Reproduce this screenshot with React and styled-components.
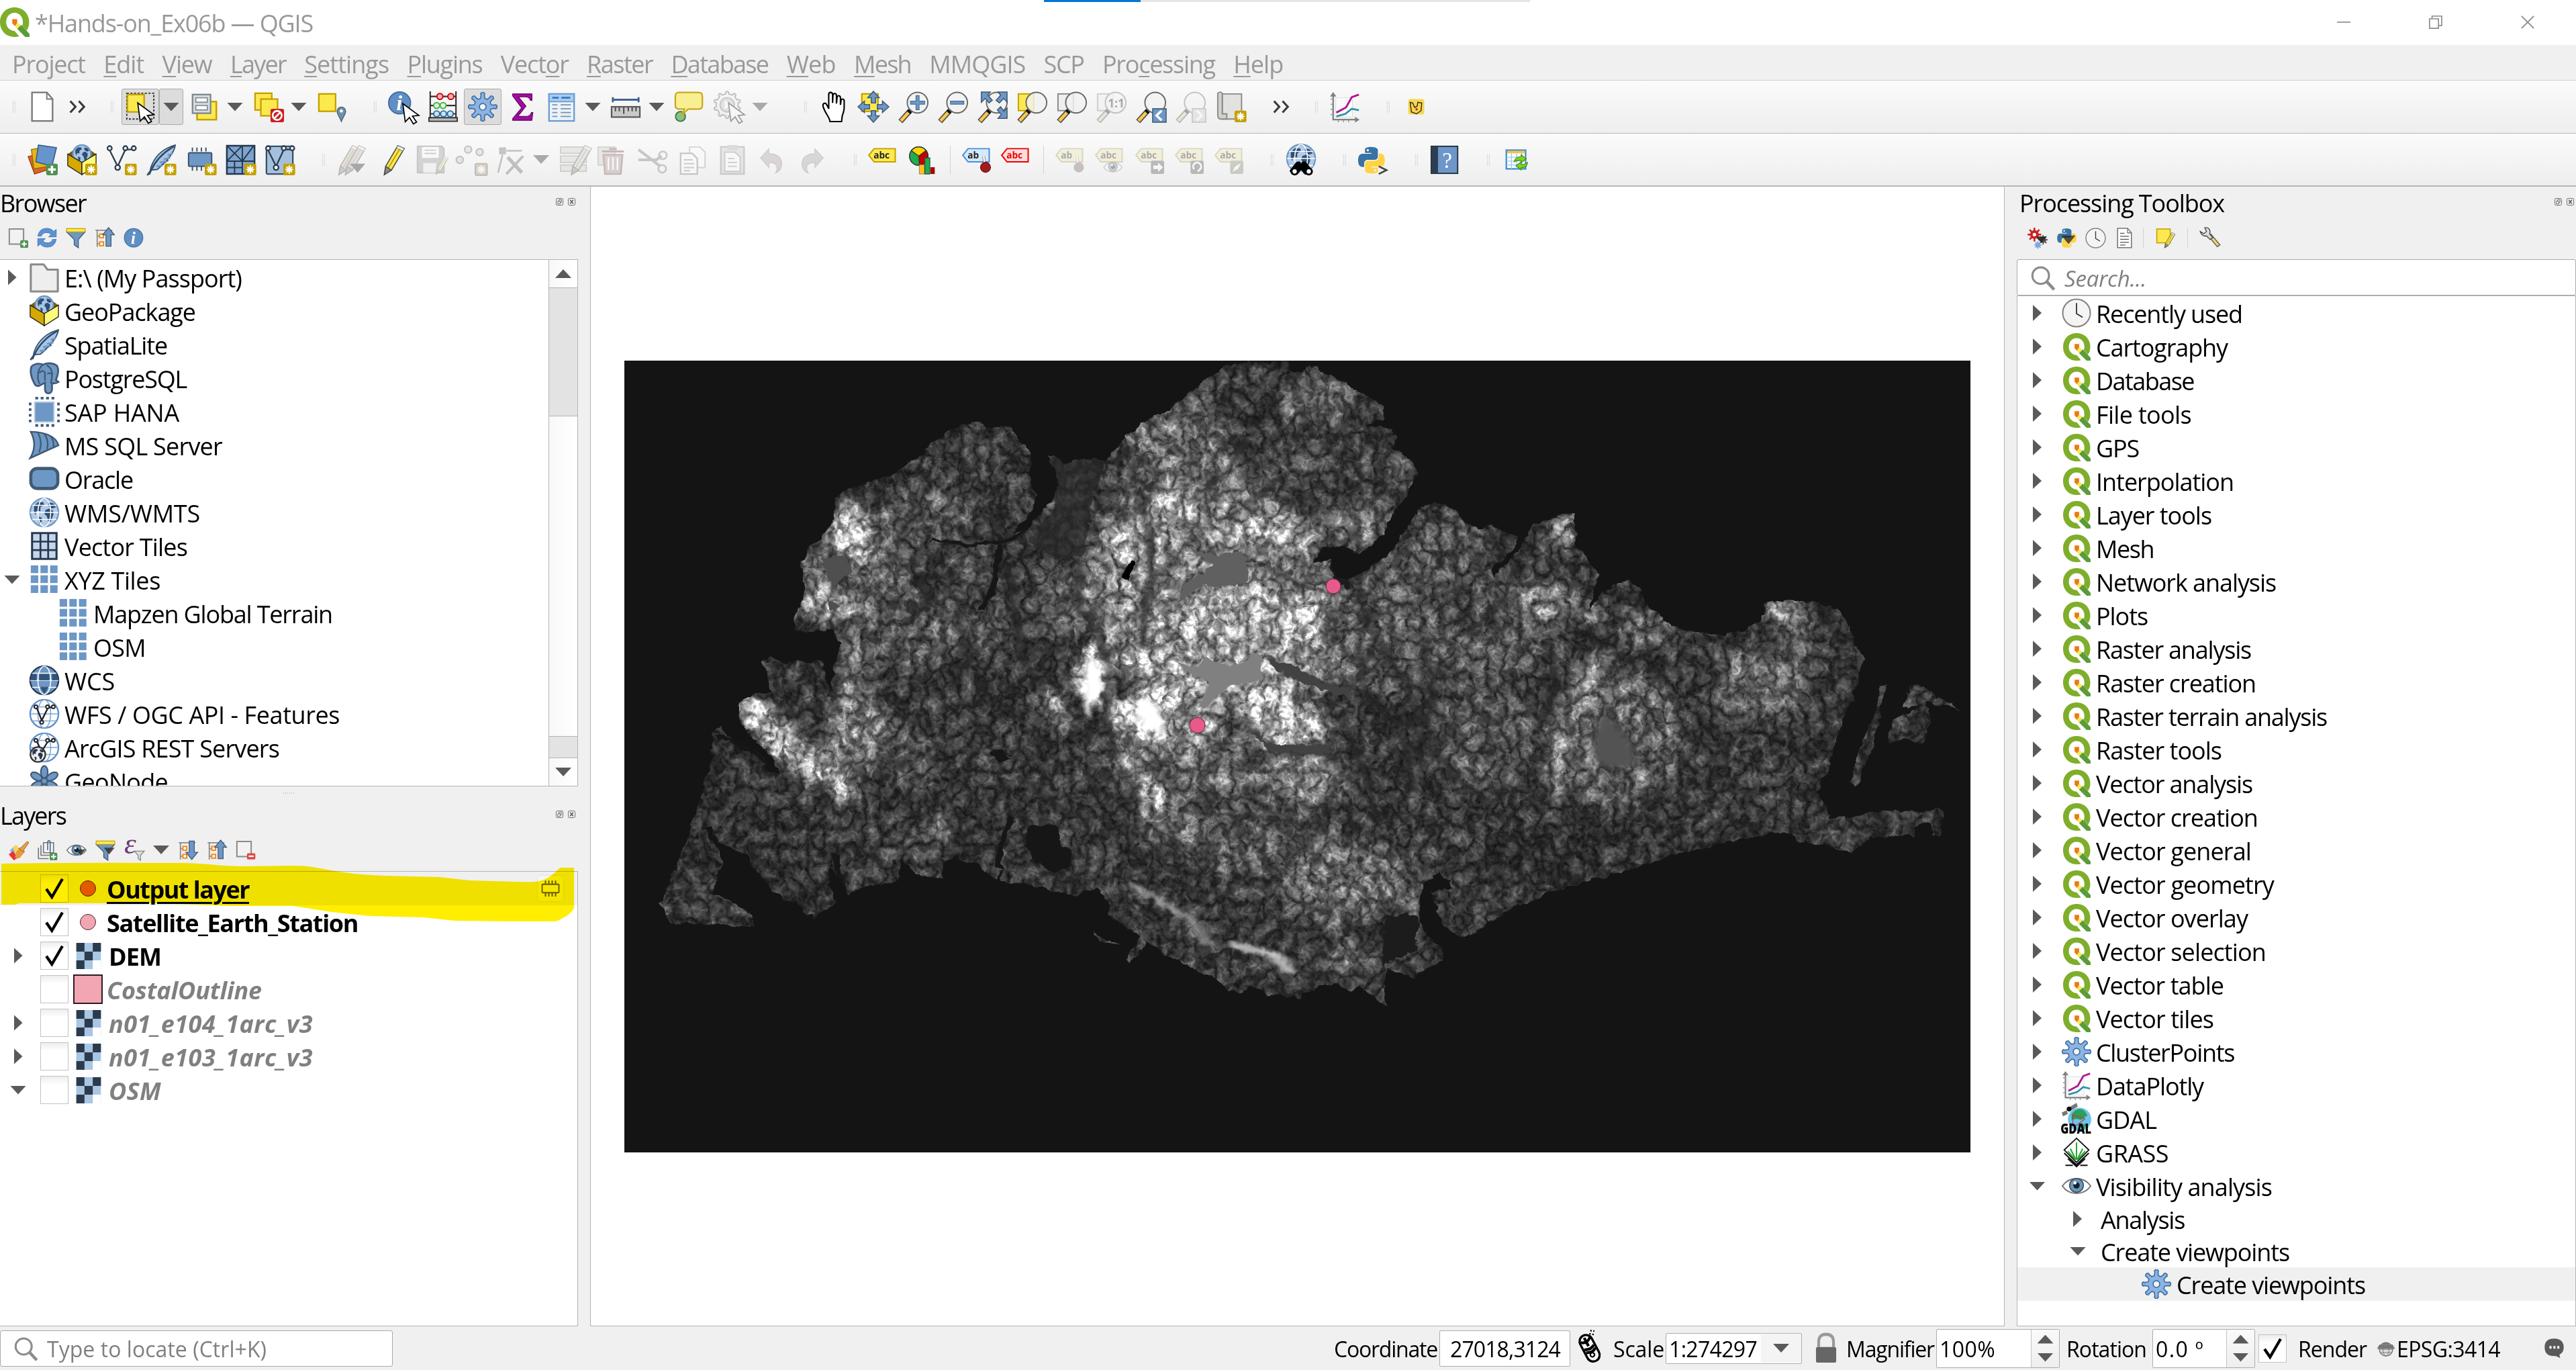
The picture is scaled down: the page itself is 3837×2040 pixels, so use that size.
import React, { useLayoutEffect, useRef, useState } from "react";
import styled, { createGlobalStyle, css } from "styled-components";

const Global = createGlobalStyle`
  html, body { margin: 0; padding: 0; background: #f0f0f0; }
  * { box-sizing: border-box; }
`;

const UI = `"Open Sans", "Noto Sans", sans-serif`;

/* ---------- text ---------- */

const TextSpan = styled.span`
  display: inline-block;
  flex: none;
  padding-top: 3px;
  white-space: pre;
  font-family: ${(p) => p.$family || UI};
  font-size: ${(p) => p.$size || 36}px;
  line-height: 1;
  color: ${(p) => p.$color || "#000"};
  font-weight: ${(p) => (p.$bold ? 700 : 400)};
  font-style: ${(p) => (p.$italic ? "italic" : "normal")};
  text-decoration: ${(p) => (p.$underline ? "underline" : "none")};
  text-decoration-thickness: 3px;
  text-underline-offset: 5px;
  u { text-decoration-thickness: 2px; text-underline-offset: 4px; }
`;

// Tracks the letters so that the label takes the given width.
function Label({ w, children, ...rest }) {
  const ref = useRef(null);
  const [track, setTrack] = useState(0);
  useLayoutEffect(() => {
    const el = ref.current;
    if (!w || !el) return;
    const n = el.textContent.length;
    setTrack((w - el.getBoundingClientRect().width) / n);
  }, [w]);
  return (
    <TextSpan ref={ref} style={{ letterSpacing: `${track}px` }} {...rest}>
      {children}
    </TextSpan>
  );
}

/* ---------- icons ---------- */

const Svg = styled.svg`
  display: block;
  flex: none;
  overflow: visible;
  width: ${(p) => p.$w}px;
  height: ${(p) => p.$h || p.$w}px;
  ${(p) => p.$off && css`opacity: 0.36; filter: grayscale(0.65);`}
`;

function gearPath(teeth, rOut, rIn, cx = 12, cy = 12) {
  let d = "";
  const step = (Math.PI * 2) / teeth;
  for (let i = 0; i < teeth; i++) {
    const a = i * step - Math.PI / 2;
    [[-0.3, rIn], [-0.17, rOut * 0.86], [-0.2, rOut * 0.93], [-0.08, rOut], [0.08, rOut], [0.2, rOut * 0.93], [0.17, rOut * 0.86], [0.3, rIn]].forEach(([k, r], j) => {
      d += `${i || j ? "L" : "M"}${(cx + Math.cos(a + k * step) * r).toFixed(2)} ${(cy + Math.sin(a + k * step) * r).toFixed(2)}`;
    });
  }
  return d + "Z";
}
const GEAR = gearPath(8, 11.6, 7);
const PY =
  "M14.25.18l.9.2.73.26.59.3.45.32.34.34.25.34.16.33.1.3.04.26.02.2-.01.13V8.5l-.05.63-.13.55-.21.46-.26.38-.3.31-.33.25-.35.19-.35.14-.33.1-.3.07-.26.04-.21.02H8.77l-.69.05-.59.14-.5.22-.41.27-.33.32-.27.35-.2.36-.15.37-.1.35-.07.32-.04.27-.02.21v3.06H3.17l-.21-.03-.28-.07-.32-.12-.35-.18-.36-.26-.36-.36-.35-.46-.32-.59-.28-.73-.21-.88-.14-1.05-.05-1.23.06-1.22.16-1.04.24-.87.32-.71.36-.57.4-.44.42-.33.42-.24.4-.16.36-.1.32-.05.24-.01h.16l.06.01h8.16v-.83H6.18l-.01-2.75-.02-.37.05-.34.11-.31.17-.28.25-.26.31-.23.38-.2.44-.18.51-.15.58-.12.64-.1.71-.06.77-.04.84-.02 1.27.05zm-6.3 1.98l-.23.33-.08.41.08.41.23.34.33.22.41.09.41-.09.33-.22.23-.34.08-.41-.08-.41-.23-.33-.33-.22-.41-.09-.41.09z";

const B = "#6d97c4";
const D = "#415a75";
const Y = "#fce94f";
const YB = "#c4a000";

const Star = () => (
  <g>
    <rect x="14.6" y="15" width="9.2" height="9" rx="1.2" fill={YB} />
    <path d="M19.2 16.3v6.4M16.2 19.5h6M17 17.3l4.4 4.4M21.4 17.3L17 21.7" stroke="#fff" strokeWidth="1.1" />
  </g>
);
const Cursor = ({ x = 0, y = 0 }) => (
  <path transform={`translate(${x} ${y})`} d="M10 9l12.5 9.2-5 .6 3.2 4.6-2.5 1.4-3-5-3.3 3.4z" fill="#fff" stroke="#000" strokeWidth="0.9" />
);
const Lens = ({ cx = 15.5, cy = 8.8, children }) => (
  <g>
    <path d="M9.6 15.2L2.2 23.4" stroke="#4d4d4d" strokeWidth="4.2" />
    <path d="M8.4 16.6L2.6 22.9" stroke="#fbc94b" strokeWidth="2.4" />
    <path d="M10.6 14.2l-2 2.2" stroke="#111" strokeWidth="3.6" />
    <circle cx={cx} cy={cy} r="8" fill="#f1f1f1" fillOpacity="0.82" stroke="#6a6a66" strokeWidth="1" />
    {children}
  </g>
);
const Globe = ({ cx = 12, cy = 12, r = 11, fill = "#b3cbe6", line = "#fff", rim = B, land }) => (
  <g>
    <circle cx={cx} cy={cy} r={r} fill={fill} stroke={rim} strokeWidth="1.2" />
    {land && (
      <path
        transform={`translate(${cx} ${cy}) scale(${r / 11})`}
        d="M-8-5l3-3 4 0 1 2-3 2 0 3-3 0-1 3-1-3zM1-2l3-1 3 2 0 3-2 5-2 0-1-4-2-2zM3-8l4 1 2 3-3 1-3-2zM-5 3l3 1 0 3-2 2z"
        fill={land}
      />
    )}
    <g fill="none" stroke={line} strokeWidth="0.8">
      <ellipse cx={cx} cy={cy} rx={r * 0.45} ry={r} />
      <path d={`M${cx - r} ${cy}h${2 * r}M${cx - r * 0.85} ${cy - r * 0.5}h${r * 1.7}M${cx - r * 0.85} ${cy + r * 0.5}h${r * 1.7}`} />
    </g>
  </g>
);
const Tag = ({ fill = Y, line = YB, color = "#222", t = "abc", s = 7.6 }) => (
  <g>
    <path d="M.6 8.5L5 3h17.6v11H5z" fill={fill} stroke={line} strokeWidth="1.1" />
    <text x="4.6" y="11.2" fontFamily="Open Sans, sans-serif" fontWeight="700" fontSize={s} fill={color}>{t}</text>
  </g>
);
const Pencil = ({ color = Y }) => (
  <g>
    <path d="M17 1l5 2.2L12 20l-5.5 3.4L7.6 17z" fill={color} stroke="#555753" strokeWidth="0.9" />
    <path d="M19.4 2.1L9.4 18.6" stroke={YB} strokeWidth="1" />
    <path d="M7.6 17l4.4 3-5.5 3.6z" fill="#888a85" stroke="#444" strokeWidth="0.6" />
    <path d="M17 1l5 2.2-1.2 2-4.9-2.4z" fill="#f4f4f0" stroke="#888" strokeWidth="0.6" />
  </g>
);
const Feather = () => (
  <g>
    <path d="M23 .5C14 3 7 9 4 18l-1 5.5 1.4-3.6 4.6-.4 4-3.5-1 .1 5-3.4-.8-.1C19.500 9 22.500 5 23 .5z" fill="#a9c6e6" stroke="#2f4a68" strokeWidth="0.9" />
    <path d="M22 1.500C14 6 8 12 4.200 20l-3 4" fill="none" stroke="#2f4a68" strokeWidth="1.300" />
    <path d="M14 11.500l5-1M11 14l5.500-1M8.500 17l4.500-.5M17 8.500l4-1.500" stroke={B} strokeWidth="1.400" />
  </g>
);
const Box = () => (
  <g>
    <path d="M1 7.500L12 13 23 7.500 18 4H6z" fill="#7a5d00" />
    <Globe cx={12} cy={7.500} r={7} land="#2e4e73" line="none" fill="#a9c6e6" />
    <path d="M1 7.500l11 6.500v9.500L1 16.500z" fill="#d6a900" stroke="#222" strokeWidth="0.700" />
    <path d="M23 7.500L12 14v9.500l11-7z" fill="#fffb7a" stroke="#222" strokeWidth="0.700" />
  </g>
);
const VNodes = () => (
  <g fill="#fff" stroke="#2c3e50" strokeWidth="1.200">
    <path d="M3 5l6 12L15 4h6" fill="none" />
    <circle cx="2.800" cy="3" r="1.700" /><circle cx="15" cy="3" r="1.700" /><circle cx="21.500" cy="3" r="1.700" /><circle cx="9" cy="18" r="1.900" />
  </g>
);
const Funnel = ({ top = Y }) => (
  <g>
    <path d="M1 5h22l-8 9v10l-5-3.500V14z" fill={B} stroke={D} strokeWidth="1" />
    <path d="M1 1h22v4H1z" fill={top} stroke={YB} strokeWidth="1" />
  </g>
);
const TreeBars = ({ up }) => (
  <g>
    <path d="M1 3h20M3 3v20M3 10h5M3 19h5" stroke="#8a8a86" strokeWidth="1.400" fill="none" />
    <rect x="6" y="7.500" width="4.500" height="4.500" fill="#fff" stroke="#f08c1a" strokeWidth="1.600" />
    <rect x="6" y="17" width="4.500" height="4.500" fill="#fff" stroke="#f08c1a" strokeWidth="1.600" />
    {up ? (
      <path d="M16.500 0l7 8.500h-4V22h-6V8.500h-4z" fill={B} stroke={D} />
    ) : (
      <path d="M16.500 23l7-8.500h-4V1h-6v13.500h-4z" fill={B} stroke={D} />
    )}
  </g>
);
const Eye = () => (
  <g>
    <path d="M.5 12C6 4 18 4 23.500 12 18 20 6 20 .5 12z" fill="#fff" stroke="#777" strokeWidth="1.100" />
    <circle cx="12" cy="11.500" r="5.600" fill="#6d97b8" stroke="#3b5166" strokeWidth="0.900" />
    <circle cx="12" cy="11.500" r="2.600" fill="#10202e" /><circle cx="10.800" cy="9.500" r="1.300" fill="#fff" />
  </g>
);
const Clock = () => (
  <g>
    <circle cx="12" cy="12" r="11.200" fill="#f3f4f3" stroke="#82827e" strokeWidth="1.100" />
    <path d="M12 4v8.500l5 3" fill="none" stroke="#333" strokeWidth="1" />
  </g>
);
const Chart = () => (
  <g>
    <path d="M3 3v19h19" fill="none" stroke="#808080" strokeWidth="1.200" />
    <path d="M3 .5L5.500 4h-5zM23.500 22L20 24.300v-4.600z" fill="#808080" />
    <path d="M1 6h2M1 10h2M1 14h2M1 18h2M7 22v2M11 22v2M15 22v2" stroke="#999" strokeWidth="0.800" />
    <path d="M5 5h13v15H5z" fill="#fafafa" stroke="#ddd" strokeWidth="0.500" />
    <path d="M5.500 16.500l7.500-4 4.500-8 5.500-2" fill="none" stroke="#b0168f" strokeWidth="1.500" />
    <path d="M5.500 19.500l7-2 5-4 5.500 1.200" fill="none" stroke="#2b93a8" strokeWidth="1.400" />
  </g>
);
const Page = ({ lines = true }) => (
  <g>
    <path d="M4 .8h11.500L20 6v17H4z" fill="#fff" stroke="#777" strokeWidth="1.200" />
    <path d="M15.500.8V6H20" fill="none" stroke="#777" />
    {lines && <path d="M7 10h10M7 13.500h10M7 17h10M7 20h6M7 6.500h5" stroke="#555" strokeWidth="1" />}
  </g>
);
const Arrow2 = ({ flip, color }) => (
  <path
    transform={flip ? "translate(24 0) scale(-1 1)" : ""}
    d="M3 10.500L9.500 3.500v3.800c6.500 0 10 3.200 10 7.700 0 3.500-1.800 6-4.800 7.300 1.300-2 1.600-3.600 1-5.300-.8-2.200-2.900-2.900-6.200-2.900v3.700z"
    fill={color}
    stroke="#888"
    strokeWidth="0.700"
  />
);
const Raster = () => (
  <g>
    <path d="M1 0h22v24H1z" fill="#a9c6e3" />
    <path d="M1 0h7.300v8H1zM15.700 0H23v8h-7.300zM8.300 8h7.400v8H8.300zM1 16h7.300v8H1z" fill="#2b3b4e" />
    <path d="M15.700 16H23v8h-7.300z" fill="#fff" />
  </g>
);
const GridTiles = () => (
  <g fill={B}>
    {[0, 1, 2].map((r) => [0, 1, 2].map((c) => <rect key={`${r}${c}`} x={1.500 + c * 7.500} y={1 + r * 7.700} width="5.800" height="6" />))}
  </g>
);

const ICONS = {
  logo: (
    <g>
      <path d="M11.800 0C5 0 0 5 0 12s5 12 11.800 12c1.400 0 2.400-.1 3.800-.5l-3.700-4.300C8 19 5 16 5 12s2.600-7.600 6.800-7.600S18.600 8 18.600 12c0 1.100-.2 2-.6 2.900l3.600 3.900c1.500-2 2.100-4.300 2.100-6.800C23.700 5 18.600 0 11.800 0z" fill="#7fae2b" />
      <path d="M14 14.500h3.500L24 21.500V24h-3.500L14 17.500z" fill="#5a9c38" />
      <path d="M10 9.500h4v3.800l-1.800 2L10 13z" fill="#ee7913" />
      <path d="M14 12.500l3 2-3 3-2-2.200z" fill="#f5e95a" />
    </g>
  ),
  new: <Page lines={false} />,
  more: <path d="M4 6l5.500 6L4 18M13 6l5.500 6-5.500 6" fill="none" stroke="#3a3a3a" strokeWidth="2.200" />,
  select: (
    <g>
      <rect x="1.500" y="1.500" width="21" height="20" fill="none" stroke="#333" strokeWidth="1" strokeDasharray="1.600 1.200" />
      <rect x="2" y="2.500" width="13" height="13.500" fill={Y} stroke={YB} strokeWidth="1.200" />
      <Cursor />
    </g>
  ),
  byvalue: (
    <g>
      <rect x="6" y="8" width="15" height="14" fill={Y} stroke={YB} strokeWidth="1.300" />
      <rect x="2.500" y="2.500" width="14" height="14.500" fill="#d7dee3" stroke="#7d868c" strokeWidth="1.200" />
      <path d="M5 5h9v3.500H5zM5 11h9v3.500H5z" fill="#fff" stroke="#8a939a" />
    </g>
  ),
  deselect: (
    <g>
      <rect x="1" y="1.500" width="13" height="13" fill={Y} stroke={YB} strokeWidth="1.200" />
      <rect x="5.500" y="6" width="13" height="13" fill={Y} stroke={YB} strokeWidth="1.200" />
      <rect x="13" y="13.500" width="10.500" height="10.500" rx="1.500" fill="#cc1f1f" />
      <circle cx="18.200" cy="18.700" r="3.500" fill="none" stroke="#fff" strokeWidth="1.400" /><path d="M16 21l4.500-4.600" stroke="#fff" strokeWidth="1.400" />
    </g>
  ),
  selloc: (
    <g>
      <rect x="1" y="2" width="13" height="13.500" fill={Y} stroke={YB} strokeWidth="1.200" />
      <path d="M18.500 23.500c-1.500-4-3.300-5.500-3.300-8a3.300 3.300 0 016.600 0c0 2.500-1.800 4-3.300 8z" fill="#7090a8" stroke="#4a6478" strokeWidth="0.700" /><circle cx="18.500" cy="15.300" r="1.200" fill="#fff" />
    </g>
  ),
  identify: (
    <g>
      <circle cx="9.500" cy="9" r="8.500" fill="#5f8fc4" stroke="#46719f" />
      <text x="7" y="14.500" fontFamily="Liberation Serif, serif" fontStyle="italic" fontWeight="700" fontSize="16" fill="#fff">i</text>
      <Cursor x={2} y={0.500} />
    </g>
  ),
  abacus: (
    <g>
      <path d="M2 0v21M22 0v21M2 4h20M2 11h20M2 17.500h20" stroke="#333" strokeWidth="1.100" />
      <path d="M1 20.500h22v2.800H1z" fill="#bbb" stroke="#333" />
      <g strokeWidth="1"><g fill="#ffb0b0" stroke="#c00"><circle cx="9.500" cy="4" r="2.300" /><circle cx="18" cy="4" r="2.300" /></g>
        <g fill="#d6ffd6" stroke="#4fae4f"><circle cx="7" cy="11" r="2.300" /><circle cx="12" cy="11" r="2.300" /></g>
        <g fill="#c5e3fa" stroke="#2e6b99"><circle cx="7" cy="17.500" r="2.300" /><circle cx="12.300" cy="17.500" r="2.300" /><circle cx="17.600" cy="17.500" r="2.300" /></g></g>
    </g>
  ),
  gear: (
    <g><path d={GEAR} fill="#8db3e2" stroke="#3a6ea5" strokeWidth="0.900" strokeLinejoin="round" /><circle cx="12" cy="12" r="2.700" fill="#f4f4f4" stroke="#3a6ea5" strokeWidth="0.900" /></g>
  ),
  sigma: <path d="M4.500 2h15v5h-1.200c-.5-2-1.500-2.700-4-2.700H9l5.800 7.200L8.500 19.500h6.500c2.500 0 3.500-1 4-3h1.200l-.8 6H4.500v-1.200l7-8.500L4.500 3.600z" fill="#a30ba3" stroke="#5c065c" strokeWidth="0.600" />,
  table: (
    <g>
      <rect x="2.500" y="2" width="19.500" height="21" fill="#eaf2fa" stroke="#6a9bd1" strokeWidth="1.200" /><path d="M2.500 2H22v6H2.500z" fill="#a8cdf0" stroke="#6a9bd1" />
      <path d="M5 5h5M12 5h7" stroke="#3e7fc4" strokeWidth="1.600" /><path d="M5 10.500h4M11.500 10.500h8M5 13.500h4M11.500 13.500h8M5 16.500h4M11.500 16.500h8M5 19.500h4M11.500 19.500h8" stroke="#7c93aa" strokeWidth="1" />
    </g>
  ),
  measure: (
    <g>
      <path d="M2 6.500h20M2 4.500v4M22 4.500v4" stroke="#3d6391" strokeWidth="1.500" /><rect x="1" y="12" width="22" height="8" fill="#c9c9c9" stroke="#555" strokeWidth="1.100" />
      <path d="M4 12.500v3M7 12.500v3M10.500 12.500v5M14 12.500v3M17 12.500v3M20 12.500v3" stroke="#444" />
    </g>
  ),
  tip: (
    <g>
      <circle cx="5" cy="19.500" r="3.800" fill="#8bbf86" stroke="#3f7a3c" /><path d="M4 .8h15q3 0 3 3v7q0 3-3 3h-8L6 18.500l2-4.700H4q-3 0-3-3v-7q0-3 3-3z" fill="#f9ee92" stroke="#c9a91c" strokeWidth="1.200" />
    </g>
  ),
  gearrun: (
    <g><path d={gearPath(10, 10.500, 8.500, 10, 10.500)} fill="#eee" stroke="#555" strokeWidth="0.900" /><circle cx="10" cy="10.500" r="5.500" fill="#b9c4d0" stroke="#777" /><path d="M8 7l5.500 3.500L8 14z" fill="#fff" /><Cursor x={1} /></g>
  ),
  hand: (
    <path d="M8 23.500c0-3-5-8-5.500-12.500 0-2 2-2.500 3-.5l1.500 3V2.500c0-2.200 2.800-2.200 3 0V9l.3-6c.4-1.800 2.600-1.700 2.700.3V9.500l.5-5c.5-1.700 2.500-1.400 2.600.5v5.500l.5-3.500c.5-1.600 2.300-1.200 2.400.5 0 5.500.3 7-1.500 11.500l-.5 4.500z" fill="#fff" stroke="#000" strokeWidth="1.100" />
  ),
  pan: (
    <g><rect x="3" y="2" width="12.500" height="13.500" fill={Y} stroke={YB} strokeWidth="1.200" />
      <path d="M12 0l4.500 5h-2.800v4h-3.400V5H7.500zM12 24l4.500-5h-2.800v-4h-3.400v4H7.500zM0 12l5-4.500v2.800h4v3.400H5v2.800zM24 12l-5-4.500v2.800h-4v3.400h4v2.800z" fill={B} stroke={D} strokeWidth="0.800" /></g>
  ),
  zin: <Lens><path d="M15.500 3v11.600M9.700 8.800h11.600" stroke="#3e6692" strokeWidth="3" /><path d="M15.500 3.500v10.600M10.200 8.800h10.600" stroke={B} strokeWidth="1.900" /></Lens>,
  zout: <Lens><path d="M10 8.800h11" stroke="#3e6692" strokeWidth="3" /><path d="M10.500 8.800h10" stroke={B} strokeWidth="1.900" /></Lens>,
  zfull: <Lens><path d="M3.500.5h7L8.500 3l3.500 4-2.500 2-3-3.500-3 3zM23.500.5v8L21 5.500 17.500 9 15 7l3.500-4-2-2.500zM23.500 21v-8L21 15.500 18.500 12 16 14.500l3 3.500-2.500 3z" fill={B} stroke={D} strokeWidth="0.800" /></Lens>,
  zsel: <g><rect x="1.500" y="2" width="12" height="13" fill={Y} stroke={YB} /><Lens /></g>,
  zlayer: <g><rect x="1.500" y="2" width="12" height="13" fill="#eee" stroke="#888" /><Lens /></g>,
  znative: <g><rect x="1.500" y="2" width="12" height="13" fill="#eee" stroke="#888" /><Lens><text x="9.500" y="12.500" fontFamily="Open Sans, sans-serif" fontWeight="700" fontSize="9" fill="#222">1:1</text></Lens></g>,
  zlast: <g><Lens /><rect x="13.500" y="13.500" width="10.500" height="10.500" fill={B} stroke={D} strokeWidth="0.800" /><path d="M20.500 15l-4 3.800 4 3.800" fill="none" stroke="#fff" strokeWidth="1.800" /></g>,
  znext: <g><Lens /><rect x="13.500" y="13.500" width="10.500" height="10.500" fill="#ccc" stroke="#777" strokeWidth="0.800" /><path d="M17 15l4 3.800-4 3.800" fill="none" stroke="#fff" strokeWidth="1.800" /></g>,
  newmap: <g><path d="M5 2h15v19.500H5z" fill="#e2e2e0" stroke="#8a8a86" /><path d="M1.500 1.500q1.800-1.800 3.500 0v16h3.500v4H4q-2.500 0-2.500-3z" fill="#d0d0ce" stroke="#8a8a86" /><Star /></g>,
  chart: <Chart />,
  mmq: <g><rect x="5.500" y="6" width="12.500" height="12" rx="2" fill="#f7d750" /><path d="M7 8.500l2 .5 1.500 3.500 2-1 .5-3 3 .5-.5 6-3.500 2.500-4-1.500z" fill="none" stroke="#222" strokeWidth="0.700" /><circle cx="12" cy="14" r="0.900" fill="#e01010" /></g>,
  addlayer: (
    <g><path d="M1 9.500l12-3 4 13-11 3.500z" fill="#d8642c" stroke="#9c3d10" strokeWidth="0.700" /><path d="M3.500 4l12-2 2 15-12 2z" fill="#e8b418" stroke="#8f6d00" strokeWidth="0.700" /><path d="M9 .5l14 2-3.500 14.500-12.500-3.500z" fill="#6794cc" stroke="#34567e" strokeWidth="0.800" />
      <rect x="15" y="15" width="9" height="9" rx="1.300" fill="#4f9152" /><path d="M19.500 16.500v6M16.500 19.500h6" stroke="#fff" strokeWidth="1.800" /></g>
  ),
  addgpkg: <g><Box /><Star /></g>,
  addvec: <g><VNodes /><Star /></g>,
  addfeather: <g><Feather /><Star /></g>,
  addmem: <g><path d="M5 2.500v3M8.500 2.500v3M12 2.500v3M15.500 2.500v3M5 17v3.500M8.500 17v3.500M12 17v3.500" stroke="#3a5068" strokeWidth="1" /><rect x="2" y="6.500" width="18" height="10.500" rx="1" fill={B} stroke="#3a5068" /><Star /></g>,
  addmesh: <g><path d="M1 1h21.500v22H1z" fill="#7ea3cd" stroke="#24384f" strokeWidth="1.300" /><path d="M1 13h21.500M13 1v22M1 1l12 12M13 1L1 13M22 1l-9 12M1 18h12M7 13v10" stroke="#24384f" strokeWidth="1" fill="none" /><Star /></g>,
  addvmesh: <g><rect x="1.500" y="1.500" width="20.500" height="21.500" fill="#a5c0dd" stroke="#3a5068" strokeWidth="1.200" rx="1" /><VNodes /><Star /></g>,
  pencils: <g><g transform="translate(-5 0)"><Pencil color="#ddb5b0" /></g><g><Pencil color="#ddb5b0" /></g><path d="M10 15h12l-6 7z" fill="#222" /></g>,
  pencil: <Pencil />,
  save: <g><path d="M1.500 1.500h19l1.500 2V22H1.500z" fill="#999" stroke="#777" strokeWidth="1.100" /><path d="M5 2h13v8.500H5z" fill="#fff" /><path d="M7 4.500h9M7 7h9" stroke="#888" /><path d="M6 14.500h10V22H6z" fill="#eee" /><g transform="translate(12 9) scale(.6)"><Pencil /></g></g>,
  points: <g fill="#ccc" stroke="#666" strokeWidth="1.100"><circle cx="9" cy="4" r="2.700" /><circle cx="18" cy="6" r="2.700" /><circle cx="2.500" cy="12" r="2.700" /><Star /></g>,
  vertex: <g fill="none" stroke="#666" strokeWidth="1.300"><path d="M3 3h4v4H3zM3 3l4 4M7 3L3 7M8 5h12M5 8L1.500 22" /><path d="M9 10l11 12" strokeWidth="2.800" /><path d="M21 9L8 23" strokeWidth="2" /></g>,
  tedit: <g><path d="M1 2h20v5H1zM1 9h20v5H1zM1 16h20v5H1z" fill="#d6cfb0" stroke="#888" strokeWidth="0.900" /><g transform="translate(3 0)"><Pencil color="#ccc" /></g></g>,
  del: <g><path d="M1 2h13v14H1z" fill="#d6cfb0" stroke="#999" /><path d="M5 8h15l-1.300 15H6.300z" fill="#e08080" stroke="#b04040" strokeWidth="1.200" /><path d="M4 5.500h17M9.500 3.500h6" stroke="#b04040" strokeWidth="1.600" /><path d="M9 10v10M12.500 10v10M16 10v10" stroke="#fff" strokeWidth="1.300" /></g>,
  cut: <g fill="none" stroke="#777" strokeWidth="1.300"><path d="M1 4l17 13M1 12h14l4-3" strokeWidth="2.200" /><circle cx="20" cy="8.500" r="3" /><circle cx="19.500" cy="19" r="3" /></g>,
  copy: <g><path d="M10 2h8l4 4v12H10z" fill="#fff" stroke="#999" /><path d="M3 7h9l4 4v12H3z" fill="#fff" stroke="#777" strokeWidth="1.200" /><path d="M5.500 12h7M5.500 15h8M5.500 18h8M5.500 20.500h5" stroke="#888" /></g>,
  paste: <g><path d="M3 2h18v21H3z" fill="#ccc" stroke="#888" strokeWidth="1.300" /><path d="M8 .5h8v4H8z" fill="#aaa" /><path d="M6 6h8l4 4v11H6z" fill="#fff" stroke="#888" /><path d="M8.500 11h5M8.500 14h7M8.500 17h7" stroke="#888" /></g>,
  undo: <Arrow2 color="#c09c90" />,
  redo: <Arrow2 color="#93aa9b" flip />,
  abc: <Tag />,
  diagram: <g><circle cx="9" cy="9" r="7.500" fill="#1fae4f" stroke="#333" strokeWidth="0.800" /><path d="M9 9L3 4.500A7.500 7.500 0 0115 4.500z" fill="#ffd400" stroke="#333" strokeWidth="0.700" /><path d="M9 9l6-4.500A7.500 7.500 0 019.500 16.500z" fill="#c40000" stroke="#333" strokeWidth="0.700" /><path d="M9.500 16h4v7.500h-4z" fill="#ffc61a" stroke="#a66" strokeWidth="0.500" /><path d="M14 10.500h4v13h-4z" fill="#1fae4f" stroke="#353" strokeWidth="0.700" /><path d="M18.500 18h3.500v5.500h-3.500z" fill="#a00" /></g>,
  abpin: <g><Tag fill="#d5e9fb" line="#4a90d9" t="ab" /><path d="M18 9.500l1.200 9" stroke="#888" strokeWidth="2.400" /><path d="M18 9.500l1.200 9" stroke="#fff" strokeWidth="1.300" /><circle cx="19.500" cy="18.500" r="4.200" fill="#a11d1d" stroke="#6e0f0f" strokeWidth="0.600" /></g>,
  abpin2: <g><Tag t="ab" /><path d="M18 9.500l1.200 9" stroke="#888" strokeWidth="2.400" /><path d="M18 9.500l1.200 9" stroke="#fff" strokeWidth="1.300" /><circle cx="19.500" cy="18.500" r="4.200" fill="#a15d5d" /></g>,
  abred: <Tag fill="#fdd" line="#e00" color="#e00" />,
  abeye: <g><Tag /><g transform="translate(7 10.500) scale(.66)"><Eye /></g></g>,
  abmove: <g><Tag /><rect x="13" y="13" width="11" height="11" rx="1.500" fill="#555" /><path d="M15 17h4v-2.500l4 4-4 4V20h-4z" fill="#fff" /></g>,
  abrot: <g><Tag /><rect x="13" y="13" width="11" height="11" rx="1.500" fill="#555" /><path d="M16 20a3.300 3.300 0 115 0l-2 2" fill="none" stroke="#fff" strokeWidth="1.600" /></g>,
  abedit: <g><Tag /><rect x="13" y="13" width="11" height="11" rx="1.500" fill="#8a8560" /><path d="M15 22l2-4 5-3-2.500 5z" fill="#fff" /></g>,
  binoc: <g><Globe cx={12} cy={11} r={11} land="#2e4e73" /><path d="M8 14q3-2 4 1 1-3 4-1l5 6.500-2 3h-4l-3-3.500-3 3.500H5l-2-3z" fill="#000" /><circle cx="7" cy="21" r="2.400" fill="#fff" stroke="#000" strokeWidth="1.500" /><circle cx="18" cy="21" r="2.400" fill="#fff" stroke="#000" strokeWidth="1.500" /></g>,
  pyconsole: <g><g transform="translate(0 2) scale(.86)"><path d={PY} fill="#3873a3" /><path d={PY} transform="rotate(180 12 12)" fill="#ffd343" /></g><path d="M16 17l6 3-6 3" fill="none" stroke="#444" strokeWidth="1.400" /></g>,
  book: <g><rect x="1" y="1" width="21.500" height="22" fill="#6d97c9" stroke="#1f2d3c" strokeWidth="1" /><path d="M1 1h5.500v22H1z" fill="#2c3e50" /><text x="10" y="18.500" fontFamily="Liberation Serif, serif" fontSize="18" fill="#fff">?</text></g>,
  refreshtable: <g transform="translate(1.500 0)"><rect x="2" y="4.500" width="15" height="14.500" fill="#fff" stroke="#3a8dd0" strokeWidth="1.200" /><path d="M2.600 5h13.800v2H2.600z" fill="#f2c14e" /><path d="M2 10h15M2 13h15M2 16h15M6 7v12M10 7v12M14 7v12" stroke="#9cc9ee" strokeWidth="0.700" /><path d="M8 13.500q1-4 5.500-4V8l4 3.200-4 3v-1.800q-3-.3-5.500 1.100zM18.500 14q-.5 4.200-5 4.200v1.600l-4-3.200 4-3v1.900q3 .2 5-1.500z" fill="#7ed321" stroke="#3f8a10" strokeWidth="0.600" /></g>,
  folder: <path d="M1.500 2h10l3 4h8v17h-21z" fill="#eee" stroke="#8a8a86" strokeWidth="1.600" strokeLinejoin="round" />,
  gpkg: <Box />,
  feather: <Feather />,
  pg: <g><path d="M2 3Q6-.5 11 1.500q6-2.500 11 1 2 4-1 11l2 1.500q-2 1.500-5 1v5q-.5 3-3 2.800-2.500-.3-2.500-3.300v-5L9 17.500Q7 19 5 17.500 0 9 2 3z" fill={B} stroke={D} strokeWidth="1.400" /><path d="M11 1.500q-4 3-4 9 0 4 1.500 6M14 2q5 3 4 9l-1 5M8 8q3-3 4.500 0v6M14.500 9q1-2 3 0" fill="none" stroke={D} strokeWidth="1.200" /></g>,
  hana: <g><rect x="4.500" y="4.500" width="15" height="15.500" fill={B} stroke="#b8d0ea" strokeWidth="1" /><path d="M5 1.500h15M5 22.700h15" stroke={D} strokeWidth="2" strokeDasharray="2.200 2" /><path d="M1 5v15.500M23 5v15.500" stroke={D} strokeWidth="2" strokeDasharray="2 2.400" /></g>,
  mssql: <g><path d="M1.500 1.500Q20 2 23 12L1 22Q7 12 1.500 1.500z" fill={B} stroke={D} strokeWidth="1.300" /><path d="M7 2q4 8 1 15.500M12 3q4 6 2 12M17 5q3 5 2 8" fill="none" stroke={D} strokeWidth="1.200" /></g>,
  oracle: <rect x="1.500" y="4" width="21" height="15.500" rx="5" fill={B} stroke={D} strokeWidth="2.400" />,
  wms: <Globe land="#2e4e73" />,
  vtiles: <g><path d="M2.500 2h19v20h-19z" fill="#c6d6ea" stroke="#24384f" strokeWidth="1.600" /><path d="M9 2v20M15 2v20M2.500 8.600h19M2.500 15.200h19" stroke="#24384f" strokeWidth="1.400" /></g>,
  xyz: <GridTiles />,
  wcs: <g><Globe fill={B} rim="#24384f" line="#fff" /><path d="M8 7h8v5H8zM2 7h4v5H1.500zM18 7h4l.6 5H18zM8.500 17h7L12 22.500z" fill="#2e4e73" opacity=".9" /></g>,
  wfs: <g><Globe fill="#fff" rim="#5b8bc7" line="#7fa6d6" /><path d="M6 7l4 10 5-10h4" fill="none" stroke="#222" strokeWidth="1.200" /><g fill="#fff" stroke="#222"><circle cx="5.500" cy="6.500" r="1.300" /><circle cx="14.500" cy="6.500" r="1.300" /><circle cx="19" cy="6.500" r="1.300" /><circle cx="10" cy="18.500" r="1.300" /></g></g>,
  arcgis: <g><Globe fill="#fff" rim="#5b8bc7" line="#7fa6d6" /><path d="M6 7l4 8 5-8h4" fill="none" stroke="#222" strokeWidth="1.200" /><circle cx="5.500" cy="6.500" r="1.300" fill="#fff" stroke="#222" /><circle cx="14.500" cy="6.500" r="1.300" fill="#fff" stroke="#222" /><circle cx="19" cy="6.500" r="1.300" fill="#fff" stroke="#222" /><Globe cx={7} cy={17.500} r={5.800} fill="#eee" rim="#333" line="none" land="#24384f" /></g>,
  geonode: <g fill={B} stroke={D} strokeWidth="1.100">{[0, 60, 120, 180, 240, 300].map((a) => <ellipse key={a} cx="12" cy="5" rx="2.700" ry="4.800" transform={`rotate(${a} 12 12)`} />)}<circle cx="12" cy="12" r="2.400" /></g>,
  pageadd: <g><path d="M1.500 1.500h17v18h-17z" fill="#f2f2f2" stroke="#8a8a86" strokeWidth="1.600" /><rect x="14.500" y="15" width="9.500" height="9" rx="1.500" fill="#4f9152" /><path d="M19.200 16.500v6M16.200 19.500h6" stroke="#fff" strokeWidth="1.800" /></g>,
  pagedel: <g><path d="M1.500 1.500h17v18h-17z" fill="#f2f2f2" stroke="#8a8a86" strokeWidth="1.600" /><rect x="13.500" y="15.500" width="10" height="7.500" rx="1.500" fill="#dd4b4b" /><path d="M15.500 19.200h6" stroke="#fff" strokeWidth="1.800" /></g>,
  refresh: <g fill="#5b93d3" stroke="#3c74b4" strokeWidth="0.700"><path d="M1 10Q3 .5 12 .8q5 .2 8 3.700L23 2v9h-9l3-3Q14 5 10 6 6 7 5.500 10z" /><path d="M23 14Q21 23.500 12 23.200q-5-.2-8-3.700L1 22v-9h9l-3 3q3 3 7 2 4-1 4.500-4z" /></g>,
  funnel: <Funnel />,
  funneldrop: <g><Funnel /><path d="M10 9h13l-6.500 8z" fill="#333" opacity=".85" /></g>,
  collapse: <TreeBars up />,
  expand: <TreeBars />,
  info: <g><circle cx="12" cy="12" r="11" fill="#5f8fc4" stroke="#46719f" /><text x="8.800" y="19" fontFamily="Liberation Serif, serif" fontStyle="italic" fontWeight="700" fontSize="20" fill="#fff">i</text></g>,
  brush: <g><path d="M1.500 12L8 6l3 8-6 6z" fill="#8fb0ee" /><path d="M0 17l5-4 6 8-5 3z" fill="#e33" /><path d="M5 8l5-2 4 9-6 2z" fill="#f7d750" /><path d="M9 13.500l4-3.500 5.500 4.500-5.500 7-5.500-.5z" fill="#e79a3c" /><path d="M11.500 10l3-1 7.500-7.500L24 3l-6 8.500.5 3z" fill="#e0a24a" stroke="#9b5d18" strokeWidth="0.700" /></g>,
  addgroup: <g fill="#f4f4f4" stroke="#777" strokeWidth="1.300"><path d="M1 9v13h12M4 6v12h13" fill="none" /><path d="M7 3h12v12H7z" /><path d="M12 12V2q1.500-3 3 0v14" fill="none" stroke="#4a6b8c" /><rect x="14.500" y="15" width="9" height="9" rx="1.500" fill="#4f9152" stroke="none" /><path d="M19 16.500v6M16 19.500h6" stroke="#fff" strokeWidth="1.600" /></g>,
  eye: <Eye />,
  eyedrop: <g><Eye /><path d="M11 11h12l-6 7z" fill="#222" opacity=".8" /></g>,
  epsilon: <g><text x="0" y="16" fontFamily="Liberation Serif, serif" fontStyle="italic" fontSize="36" fill="#6b3a78">ε</text><path d="M12 13h12l-4.500 5v6l-3-2v-4z" fill="#ddd" stroke="#888" /></g>,
  gears: <g><path d={gearPath(8, 8, 5, 8, 8)} fill="#c22" /><circle cx="8" cy="8" r="2" fill="#fff" /><path d={gearPath(8, 5.500, 3.500, 18, 14)} fill="#555" /><path d={gearPath(8, 4.500, 3, 12, 20)} fill="#7fa6e0" /><path d="M10 10h12l-6 8z" fill="#222" opacity=".8" /></g>,
  pydrop: <g><g transform="translate(1 1) scale(.92)"><path d={PY} fill="#3873a3" /><path d={PY} transform="rotate(180 12 12)" fill="#ffd343" /></g><path d="M6 9h16l-8 10z" fill="#222" opacity=".75" /></g>,
  clock: <Clock />,
  doc: <Page />,
  note: <g><rect x="2" y="1.500" width="15.500" height="16" fill={Y} stroke={YB} strokeWidth="1.200" /><g transform="translate(6 5) scale(.78)"><Pencil /></g></g>,
  wrench: <g><path d="M10 10l10 12 3-2L13 8z" fill="#f0d36a" stroke="#555" /><path d="M1 5l4 2.500L8 5 6 .8Q11 0 12 5l-.5 3L15 12l-3 2-4-4Q3 11 1 5z" fill="#ddd" stroke="#444" /></g>,
  gdal: <g><circle cx="14.500" cy="12.500" r="9.500" fill="#6cc4f0" /><path d="M8 8q5-6 10-3l3 4-5 4-4-1-4 1zM13 17l7-1-2 5z" fill="#2f9e5b" /><path d="M9 9l10 3M9 9v9M19 12l-8 6" stroke="#c33" strokeWidth="0.600" /><path d="M0 7l4-2 1 3-4 2zM7 2l5-3 1 3-5 3z" fill="#777" /><circle cx="6" cy="4" r="2" fill="#111" /><text x="-1" y="24" fontFamily="Open Sans, sans-serif" fontWeight="800" fontSize="11.500" textLength="25" lengthAdjust="spacingAndGlyphs" fill="#000">GDAL</text></g>,
  grass: <g><path d="M12 .5L22 10 12 20 2 10z" fill="#fff" stroke="#111" /><path d="M2 12.500l10 9.500 10-9.500M5 17l7 6.500 7-6.500M3 22.500h6M15 22.500h6" fill="none" stroke="#111" strokeWidth="1.100" /><path d="M12 18V4M11.500 18L7 9M12.500 18L17 9M11 18L5 11M13 18l6-7" stroke="#25a52d" strokeWidth="1.100" /></g>,
  search: <g fill="none" stroke="#8c8c8c"><circle cx="9.500" cy="10" r="8" strokeWidth="2" /><path d="M15.500 16l7 7.500" strokeWidth="3" /></g>,
  raster: <Raster />,
  mem: <g fill="none" stroke="#6b6400"><rect x="2" y="7" width="20" height="10" rx="1" strokeWidth="1.500" /><path d="M6 2.500v4.500M10 2.500v4.500M14 2.500v4.500M18 2.500v4.500M6 17v4.500M10 17v4.500M14 17v4.500M18 17v4.500" strokeWidth="1.600" /></g>,
  mouse: <g transform="rotate(-28 12 12)"><rect x="7" y="0" width="11" height="24" rx="5.500" fill="#fff" stroke="#000" strokeWidth="1.900" /><path d="M8 4q4 4 9 0M8 11q5 3 9 0M8 14q5 3 9 0M12.500 2v8" fill="none" stroke="#000" strokeWidth="2.400" /><circle cx="12" cy="18" r="1.800" fill="none" stroke="#000" strokeWidth="1.300" /><path d="M18 1l4 3M20-1l3 2" stroke="#000" strokeWidth="1.300" strokeDasharray="1.300 1.300" /></g>,
  lock: <g><path d="M5 11V7q0-6 7-6t7 6v4" fill="none" stroke="#999" strokeWidth="2.600" /><rect x="2.500" y="11" width="19" height="12.500" rx="1.500" fill="#666" /></g>,
  crs: <g><Globe cx={12} cy={13} r={8.500} fill="#ddd" rim="#777" line="#777" /><path d="M3.500 7h17l3 5.500H.5z" fill="#777" /><path d="M7 7q5-5 10 0" fill="#777" /></g>,
  bubble: <path d="M12 1q11 0 11 10 0 6-5 8.500L19 23.500 14 21Q1 22 1 11 1 1 12 1zM6.500 9.500v3h2.500v-3zM11 9.500v3h2.500v-3zM15.500 9.500v3H18v-3z" fill="#5a5a5a" fillRule="evenodd" />,
  check: <path d="M4 12.500l5.500 8L20 2.500" fill="none" stroke="#000" strokeWidth="2.800" />,
  min: <path d="M0 12h24" stroke="#8c8c8c" strokeWidth="2" />,
  restore: <path d="M1 6h16v17H1zM5.500 6V1.200h17.300v17H17" fill="none" stroke="#8c8c8c" strokeWidth="2" />,
  close: <path d="M1 1l22 22M23 1L1 23" fill="none" stroke="#8c8c8c" strokeWidth="2.200" />,
  float: <g fill="none" stroke="#666" strokeWidth="2"><rect x="1" y="1" width="22" height="22" rx="4" /><path d="M6 10h8v9H6zM10 10V5h8v9h-4" /></g>,
  shut: <g fill="none" stroke="#666" strokeWidth="2"><rect x="1" y="1" width="22" height="22" rx="4" /><path d="M7 6l10 12M17 6L7 18" strokeWidth="4" /></g>,
};

const Icon = ({ n, size = 48, h, off }) => (
  <Svg $w={size} $h={h} $off={off} viewBox="0 0 24 24" preserveAspectRatio={h ? "none" : undefined}>
    {ICONS[n]}
  </Svg>
);

/* ---------- window frame ---------- */

const Window = styled.div`
  width: 3837px;
  height: 2040px;
  display: flex;
  flex-direction: column;
  background: #f0f0f0;
  overflow: hidden;
`;
const Progress = styled.div`
  height: 3px;
  flex: none;
  display: flex;
  padding-left: 1555px;
  background: #fff;
`;
const ProgressPart = styled.div`
  width: ${(p) => p.$w}px;
  background: ${(p) => p.$c};
`;
const TitleBar = styled.div`
  height: 64px;
  flex: none;
  display: flex;
  align-items: center;
  background: #fff;
  gap: 8px;
  padding-bottom: 4px;
`;
const WindowButtons = styled.div`
  margin-left: auto;
  display: flex;
  gap: 117px;
  padding-right: 62px;
`;
const MenuBar = styled.div`
  height: 53px;
  flex: none;
  display: flex;
  align-items: center;
  gap: 27.3px;
  padding: 2px 0 0 18px;
  border-bottom: 1px solid #cfcfcf;
`;
const Toolbar = styled.div`
  height: ${(p) => p.$h}px;
  flex: none;
  display: flex;
  align-items: center;
  background: linear-gradient(#fbfbfb, #eeeeee);
  border-bottom: ${(p) => p.$line}px solid #b7b7b7;
`;
const Slot = styled.div`
  flex: none;
  width: ${(p) => p.$w}px;
  height: ${(p) => (p.$framed ? 54 : 48)}px;
  margin-left: ${(p) => p.$gap}px;
  display: flex;
  align-items: center;
  justify-content: center;
  ${(p) => p.$framed && css`background: #dcdcdc; border: 1px solid #aaa; border-radius: 3px;`}
`;
const Grip = styled.div`
  width: 5px;
  height: 18px;
  background: radial-gradient(circle, #cfcfcf 0.8px, transparent 1.1px) 0 0 / 3px 3px;
`;
const Divider = styled.div`
  flex: none;
  width: 1px;
  height: ${(p) => p.$h || 42}px;
  background: #d2d2d2;
`;
const Tri = styled.div`
  flex: none;
  width: ${(p) => (p.$dir === "right" ? 13 : 24)}px;
  height: ${(p) => (p.$dir === "right" ? 24 : 13)}px;
  background: ${(p) => p.$c || "#5a5a5a"};
  clip-path: ${(p) =>
    p.$dir === "right" ? "polygon(0 0, 100% 50%, 0 100%)" : p.$dir === "up" ? "polygon(0 100%, 50% 0, 100% 100%)" : "polygon(0 0, 100% 0, 50% 100%)"};
`;

// Each entry: [icon, centre along the bar, options]
const BAR1 = [
  ["|", 20], ["new", 63], ["more", 116], ["|", 166], ["select", 209, { f: 56 }], ["v", 255, { f: 36 }], ["byvalue", 305], ["v", 350],
  ["deselect", 401], ["v", 445], ["selloc", 496], ["|", 558], ["identify", 600], ["abacus", 660], ["gear", 719, { f: 56, s: 44 }], ["sigma", 778],
  ["table", 836], ["v", 883], ["measure", 932], ["v", 978], ["tip", 1027], ["gearrun", 1087, { off: 1 }], ["v", 1132, { off: 1 }], ["|", 1199],
  ["hand", 1244], ["pan", 1301], ["zin", 1360], ["zout", 1419], ["zfull", 1478], ["zsel", 1537], ["zlayer", 1596], ["znative", 1655, { off: 1 }],
  ["zlast", 1714], ["znext", 1773, { off: 1 }], ["newmap", 1834], ["more", 1909], ["|", 1960], ["chart", 2003], ["|", 2067], ["mmq", 2110],
];
const BAR2 = [
  ["|", 20], ["addlayer", 63], ["addgpkg", 122], ["addvec", 181], ["addfeather", 240], ["addmem", 300], ["addmesh", 359], ["addvmesh", 417], ["|", 481],
  ["pencils", 525, { off: 1 }], ["pencil", 583], ["save", 642, { off: 1 }], ["points", 703, { off: 1 }], ["vertex", 762, { off: 1 }], ["v", 806, { off: 1 }],
  ["tedit", 856, { off: 1 }], ["del", 912, { off: 1 }], ["cut", 972, { off: 1 }], ["copy", 1031, { off: 1 }], ["paste", 1091, { off: 1 }], ["undo", 1150, { off: 1 }],
  ["redo", 1209, { off: 1 }], ["|", 1273], ["abc", 1314, { s: 43 }], ["diagram", 1374, { s: 44 }], ["-", 1415], ["abpin", 1454, { s: 43 }], ["abred", 1512, { s: 43 }], ["-", 1554],
  ["abpin2", 1593, { off: 1, s: 43 }], ["abeye", 1652, { off: 1, s: 43 }], ["abmove", 1712, { off: 1, s: 43 }], ["abrot", 1771, { off: 1, s: 43 }], ["abedit", 1830, { off: 1, s: 43 }],
  ["|", 1894], ["binoc", 1938], ["|", 2002], ["pyconsole", 2046], ["|", 2109], ["book", 2152, { s: 44 }], ["|", 2216], ["refreshtable", 2260],
];

function ToolStrip({ items, h, line }) {
  let edge = 0;
  return (
    <Toolbar $h={h} $line={line}>
      {items.map(([n, c, o = {}], i) => {
        const w = o.f || (n === "|" ? 6 : n === "-" ? 2 : n === "v" ? 24 : o.s || 48);
        const gap = c - w / 2 - edge;
        edge = c + w / 2;
        return (
          <Slot key={i} $w={w} $gap={gap} $framed={!!o.f}>
            {n === "|" ? <Grip /> : n === "-" ? <Divider /> : n === "v" ? <Tri $c={o.off ? "#a9a9a9" : undefined} /> : <Icon n={n} size={o.s || (n === "more" ? 34 : 46)} off={!!o.off} />}
          </Slot>
        );
      })}
    </Toolbar>
  );
}

const MENUS = [
  ["Pro", "j", "ect", 109], ["", "E", "dit", 60], ["", "V", "iew", 74], ["", "L", "ayer", 83], ["", "S", "ettings", 126], ["", "P", "lugins", 112],
  ["Vect", "o", "r", 101], ["", "R", "aster", 98], ["", "D", "atabase", 145], ["", "W", "eb", 73], ["", "M", "esh", 85], ["MMQGIS", "", "", 143],
  ["SCP", "", "", 60], ["Pro", "c", "essing", 168], ["", "H", "elp", 74],
];

/* ---------- docks ---------- */

const Body = styled.div`
  flex: none;
  height: 1697px;
  display: flex;
`;
const LeftDock = styled.div`
  width: 879px;
  flex: none;
  display: flex;
  flex-direction: column;
  position: relative;
`;
const RightDock = styled.div`
  flex: 1;
  min-width: 0;
  padding-left: 18px;
  display: flex;
  flex-direction: column;
`;
const DockTitle = styled.div`
  height: 50px;
  flex: none;
  display: flex;
  align-items: center;
  padding: 0 ${(p) => p.$right}px 3px ${(p) => p.$left}px;
`;
const DockButtons = styled.div`
  margin-left: auto;
  display: flex;
  gap: 7px;
  padding-bottom: 2px;
`;
const MiniBar = styled.div`
  height: ${(p) => p.$h}px;
  flex: none;
  display: flex;
  align-items: center;
  padding: 0 0 6px ${(p) => p.$left}px;
  gap: ${(p) => p.$gap}px;
`;
const MiniGroup = styled.div`
  display: flex;
  align-items: center;
  gap: 17px;
`;
const Panel = styled.div`
  width: ${(p) => p.$w}px;
  height: ${(p) => p.$h}px;
  flex: none;
  display: flex;
  background: #fff;
  border: 1px solid #b4b4b4;
  border-left-width: ${(p) => (p.$leftLine ? 1 : 0)}px;
  overflow: hidden;
`;
const Rows = styled.div`
  flex: 1;
  min-width: 0;
  padding-top: ${(p) => p.$top || 0}px;
`;
const Row = styled.div`
  height: ${(p) => p.$h || 50}px;
  display: flex;
  align-items: center;
  background: ${(p) => (p.$on ? "#f0f0f0" : "transparent")};
`;
const Cell = styled.div`
  flex: none;
  width: ${(p) => p.$w}px;
  display: flex;
  align-items: center;
  justify-content: ${(p) => p.$align || "center"};
`;
const ScrollCol = styled.div`
  width: 43px;
  flex: none;
  display: flex;
  flex-direction: column;
  border-left: 1px solid #b4b4b4;
`;
const ScrollPart = styled.div`
  height: ${(p) => p.$h}px;
  display: flex;
  align-items: center;
  justify-content: center;
  border-bottom: ${(p) => (p.$last ? 0 : 1)}px solid #b4b4b4;
  background: ${(p) => (p.$groove ? "#e3e3e3" : "linear-gradient(90deg, #f8f8f8, #ffffff)")};
`;
const Splitter = styled.div`
  height: 19px;
  flex: none;
  display: flex;
  align-items: center;
  padding-left: 421px;
`;
const SplitDots = styled.div`
  width: 18px;
  height: 2px;
  background: radial-gradient(circle, #c4c4c4 0.8px, transparent 1.1px) 0 0 / 3px 2px;
`;
const CheckBox = styled.div`
  width: ${(p) => p.$w || 42}px;
  height: 42px;
  flex: none;
  display: flex;
  align-items: center;
  justify-content: center;
  border: 1px solid #c3c3c3;
  background: linear-gradient(#ededed, #fff 30%);
`;
const Dot = styled.div`
  width: 24px;
  height: 24px;
  border-radius: 50%;
  background: ${(p) => p.$c};
  border: 1px solid #4a2a2a;
`;
const Swatch = styled.div`
  width: 44px;
  height: 44px;
  background: #f2a5b2;
  border: 2px solid #33191f;
`;
const Chip = styled.div`
  margin-left: auto;
  margin-right: 20px;
  width: 40px;
  height: 40px;
  border: 1px solid #e2e2e2;
  border-radius: 5px;
  background: #f6f6f6;
  display: flex;
  align-items: center;
  justify-content: center;
`;
const Marker = styled.svg`
  position: absolute;
  left: 0;
  top: 1000px;
  width: 870px;
  height: 110px;
  mix-blend-mode: multiply;
  pointer-events: none;
`;
const SearchBox = styled.div`
  height: 54px;
  width: ${(p) => (p.$w ? `${p.$w}px` : "auto")};
  flex: none;
  display: flex;
  align-items: center;
  gap: 13px;
  padding-left: ${(p) => p.$left}px;
  background: #fff;
  border: 1px solid #a9a9a9;
  border-radius: 3px;
`;

const BROWSER = [
  ["r", "folder", "E:\\ (My Passport)", 264], ["", "gpkg", "GeoPackage", 195], ["", "feather", "SpatiaLite", 153], ["", "pg", "PostgreSQL", 182],
  ["", "hana", "SAP HANA", 171], ["", "mssql", "MS SQL Server", 235], ["", "oracle", "Oracle", 102], ["", "wms", "WMS/WMTS", 202], ["", "vtiles", "Vector Tiles", 183],
  ["d", "xyz", "XYZ Tiles", 143], ["", "xyz", "Mapzen Global Terrain", 356, 43], ["", "xyz", "OSM", 78, 43], ["", "wcs", "WCS", 75], ["", "wfs", "WFS / OGC API - Features", 410],
  ["", "arcgis", "ArcGIS REST Servers", 320], ["", "geonode", "GeoNode", 154],
];
const TOOLS = [
  ["clock", "Recently used", 218], ["logo", "Cartography", 196], ["logo", "Database", 146], ["logo", "File tools", 142], ["logo", "GPS", 64], ["logo", "Interpolation", 205],
  ["logo", "Layer tools", 172], ["logo", "Mesh", 86], ["logo", "Network analysis", 268], ["logo", "Plots", 77], ["logo", "Raster analysis", 231], ["logo", "Raster creation", 238],
  ["logo", "Raster terrain analysis", 344], ["logo", "Raster tools", 187], ["logo", "Vector analysis", 233], ["logo", "Vector creation", 241], ["logo", "Vector general", 231],
  ["logo", "Vector geometry", 265], ["logo", "Vector overlay", 226], ["logo", "Vector selection", 253], ["logo", "Vector table", 190], ["logo", "Vector tiles", 175],
  ["gear", "ClusterPoints", 206], ["chart", "DataPlotly", 160], ["gdal", "GDAL", 90], ["grass", "GRASS", 108], ["eye", "Visibility analysis", 262],
];
const LAYERS = [
  { t: "Output layer", w: 212, on: 1, sym: <Dot $c="#e65f00" />, u: 1, chip: 1, sel: 1 },
  { t: "Satellite_Earth_Station", w: 374, on: 1, sym: <Dot $c="#f2a5b2" /> },
  { t: "DEM", w: 78, on: 1, exp: "right", r: 1 },
  { t: "CostalOutline", w: 231, sym: <Swatch />, off: 1 },
  { t: "n01_e104_1arc_v3", w: 304, exp: "right", r: 1, off: 1 },
  { t: "n01_e103_1arc_v3", w: 304, exp: "right", r: 1, off: 1 },
  { t: "OSM", w: 78, exp: "down", r: 1, off: 1 },
];

const Buttons = () => (
  <DockButtons>
    <Icon n="float" size={11} />
    <Icon n="shut" size={11} />
  </DockButtons>
);

/* ---------- map ---------- */

const Canvas = styled.div`
  width: 2107px;
  flex: none;
  background: #fff;
  border: 1px solid #b4b4b4;
  border-top: 0;
  padding: 259px 0 0 50px;
`;
const MapSvg = styled.svg`
  display: block;
  width: 2005px;
  height: 1179px;
`;

const LAND =
  "M715 29L765 27 772 50 780 60 793 38 810 55 830 75 855 105 877 135 877 160 860 180 887 185 892 210 890 235 905 250 917 290 905 340 893 370 880 420 865 455 852 475 825 462 805 468 797 500 815 488 822 530 838 545 850 525 878 490 900 430 920 365 940 357 960 380 965 400 985 418 1000 412 1020 430 1030 440 1020 480 1005 505 1003 530 1025 490 1040 440 1050 405 1075 395 1080 382 1095 382 1098 460 1115 500 1123 525 1115 580 1112 610 1125 575 1140 550 1155 540 1170 560 1180 600 1200 635 1225 660 1255 668 1285 662 1310 630 1313 595 1335 586 1370 590 1400 610 1410 650 1420 700 1427 725 1420 790 1405 850 1395 920 1385 990 1372 1040 1385 1060 1387 1095 1410 1093 1450 1080 1517 1075 1517 1137 1505 1137 1505 1110 1485 1110 1485 1135 1435 1140 1412 1175 1380 1155 1350 1150 1348 1130 1310 1135 1270 1150 1210 1180 1150 1220 1090 1255 1030 1300 990 1350 965 1380 945 1340 935 1290 932 1265 955 1260 955 1240 940 1225 928 1240 920 1280 918 1340 925 1370 945 1395 942 1430 910 1468 890 1450 880 1440 878 1530 860 1500 850 1490 840 1500 820 1480 800 1490 780 1515 745 1505 725 1485 715 1505 700 1500 690 1475 660 1445 620 1405 595 1365 560 1320 562 1290 548 1260 520 1275 500 1265 470 1250 440 1240 440 1210 435 1240 410 1200 385 1185 372 1205 372 1240 340 1225 325 1190 320 1245 290 1250 265 1275 245 1210 240 1250 250 1290 225 1330 200 1290 180 1270 160 1220 150 1180 130 1165 115 1150 105 1110 100 1115 122 1195 108 1270 130 1290 155 1320 157 1350 60 1340 50 1290 65 1220 80 1140 95 1050 108 960 110 895 118 882 130 910 165 945 175 985 185 990 180 960 160 920 138 860 140 830 155 805 175 805 172 760 165 730 172 715 185 730 235 730 240 770 245 800 250 720 255 690 245 655 205 660 200 640 212 590 215 550 210 500 220 465 240 430 247 390 250 350 265 325 290 310 320 290 345 250 370 205 395 175 415 168 425 185 445 178 460 210 473 240 472 310 480 340 467 400 450 430 470 420 490 370 505 320 500 280 492 250 515 265 545 255 560 262 580 205 600 175 640 130 670 80 700 40Z" +
  "M1447 785L1453 783 1440 900 1425 990 1418 1022 1411 1015 1425 920 1440 850zM1480 785L1490 783 1537 843 1500 822 1503 870 1495 922 1475 910 1455 920 1460 870 1475 850 1495 830 1472 838zM545 1360L575 1392 555 1385zM600 1370L606 1375 602 1400 587 1435 582 1425 590 1400z";

// [cx, cy, rx, ry, shade, opacity, rotation]
const GLOW = [
  [680, 560, 150, 250, "#848484", 0.9], [700, 700, 120, 160, "#a0a0a0", 0.7], [630, 385, 38, 40, "#f0f0f0", 0.9], [660, 330, 90, 90, "#808080", 0.6],
  [640, 220, 60, 110, "#7c7c7c", 0.7], [800, 120, 40, 50, "#989898", 0.6], [740, 430, 60, 30, "#aaaaaa", 0.7], [850, 400, 40, 60, "#808080", 0.5], [895, 290, 14, 45, "#888", 0.7],
  [800, 240, 70, 60, "#4c4c4c", 0.6], [690, 610, 36, 55, "#d8d8d8", 0.8], [770, 630, 34, 55, "#c0c0c0", 0.7], [575, 440, 20, 30, "#c0c0c0", 0.8], [600, 620, 30, 60, "#9a9a9a", 0.7],
  [545, 760, 18, 60, "#fff", 1], [608, 850, 28, 58, "#fff", 1], [820, 740, 40, 60, "#8c8c8c", 0.7],
  [573, 860, 16, 35, "#e0e0e0", 0.8], [735, 815, 20, 24, "#fff", 1], [765, 880, 50, 60, "#c8c8c8", 0.8], [650, 900, 45, 60, "#b4b4b4", 0.7], [650, 740, 70, 50, "#acacac", 0.7],
  [265, 420, 24, 60, "#dcdcdc", 0.9], [250, 595, 44, 36, "#c4c4c4", 0.8], [300, 500, 30, 70, "#909090", 0.7], [225, 540, 16, 70, "#a0a0a0", 0.7], [268, 760, 14, 80, "#a0a0a0", 0.7],
  [175, 890, 20, 90, "#dcdcdc", 0.9, -24], [230, 975, 22, 85, "#dcdcdc", 0.8, -30], [275, 900, 36, 90, "#a0a0a0", 0.7], [400, 300, 50, 110, "#404040", 0.7], [350, 380, 50, 60, "#6c6c6c", 0.6], [510, 590, 30, 90, "#747474", 0.7],
  [340, 650, 80, 90, "#585858", 0.7], [400, 500, 24, 50, "#787878", 0.6], [500, 840, 14, 50, "#b4b4b4", 0.7, -14], [790, 1000, 50, 60, "#989898", 0.7], [620, 1060, 18, 110, "#c0c0c0", 0.8, -22],
  [590, 950, 24, 70, "#a8a8a8", 0.7], [680, 980, 60, 60, "#747474", 0.7], [735, 1160, 70, 60, "#7c7c7c", 0.6], [830, 1240, 70, 100, "#7c7c7c", 0.7], [905, 1285, 8, 24, "#e0e0e0", 0.8], [840, 1420, 35, 30, "#808080", 0.8],
  [890, 650, 70, 160, "#606060", 0.7], [950, 480, 60, 100, "#565656", 0.7], [1080, 430, 14, 35, "#acacac", 0.8], [1045, 590, 55, 50, "#888", 0.7], [1000, 700, 70, 60, "#626262", 0.7],
  [1118, 620, 8, 22, "#eee", 0.9], [1110, 800, 18, 90, "#a0a0a0", 0.8, 12], [1080, 950, 16, 90, "#9c9c9c", 0.8], [1140, 900, 80, 160, "#6c6c6c", 0.8], [1310, 780, 50, 80, "#787878", 0.8],
  [1335, 605, 26, 24, "#c0c0c0", 0.8], [1350, 660, 14, 38, "#a0a0a0", 0.7], [1180, 650, 35, 40, "#707070", 0.7], [990, 920, 60, 130, "#585858", 0.7], [368, 1115, 8, 18, "#fff", 0.8],
  [430, 650, 20, 60, "#707070", 0.6], [340, 960, 30, 70, "#646464", 0.6], [700, 1120, 120, 90, "#585858", 0.6],
  [150, 1150, 90, 120, "#303030", 0.6], [1100, 1180, 140, 50, "#323232", 0.6], [1370, 950, 30, 160, "#343434", 0.6],
];

const RIVERS =
  "M360 447L400 455 445 450 470 420M437 455L434 520 428 575 415 610M452 1090L440 1150 436 1215M430 940L445 955M115 900L165 950 180 990M250 1180L258 1260";
const VALLEYS =
  "M580 210L590 300 620 330M720 210L700 280 670 330M770 290L740 330 700 400M850 560L860 650 880 700 905 800 925 880M745 725L790 765 850 800 890 860 905 950 910 1030M720 880L760 940 815 945 830 1000M925 700L935 780 930 870M1030 500L1010 600 975 660M460 1000L500 1060 540 1100M1070 700L1075 800 1050 900M640 1080L720 1090 800 1110M350 520L355 600 330 640M390 640L400 720 380 800M445 500L455 600 465 720 490 800M530 490L528 600 550 660 562 740 560 850M600 330L610 480 600 700M830 850L850 960 870 1100M725 490L790 560 850 580M560 850L570 950 600 1060M860 700L850 770M900 860L960 1000 1000 1060";

const IMG = "translate(-10.4 -17.2) scale(1.301 .6378)";

const Map = () => (
  <MapSvg viewBox="0 0 2005 1179">
    <defs>
      <clipPath id="land"><path d={LAND} transform={IMG} /></clipPath>
      <filter id="soft2" x="-20%" y="-20%" width="140%" height="140%"><feGaussianBlur stdDeviation="2.500" /></filter>
      <filter id="soft4" x="-20%" y="-20%" width="140%" height="140%"><feGaussianBlur stdDeviation="4" /></filter>
      <filter id="rough" x="-2%" y="-2%" width="104%" height="104%">
        <feTurbulence type="fractalNoise" baseFrequency="0.06" numOctaves="3" seed="9" />
        <feDisplacementMap in="SourceGraphic" scale="12" xChannelSelector="R" yChannelSelector="G" />
      </filter>
      <filter id="relief" filterUnits="userSpaceOnUse" x="0" y="0" width="2005" height="1179" colorInterpolationFilters="sRGB">
        <feGaussianBlur in="SourceGraphic" stdDeviation="10" result="base" />
        <feTurbulence type="turbulence" baseFrequency="0.042 0.036" numOctaves="2" seed="4" />
        <feColorMatrix values="1.400 0 0 0 0 1.400 0 0 0 0 1.400 0 0 0 0 0 0 0 0 1" result="veins" />
        <feComposite in="base" in2="veins" operator="arithmetic" k1="1.400" k2="0.480" result="hills" />
        <feTurbulence type="fractalNoise" baseFrequency="0.170" numOctaves="2" seed="21" />
        <feColorMatrix values="1.800 0 0 0 -.4 1.800 0 0 0 -.4 1.800 0 0 0 -.4 0 0 0 0 1" result="grain" />
        <feComposite in="hills" in2="grain" operator="arithmetic" k1="0.650" k2="0.660" />
      </filter>
    </defs>
    <rect width="2005" height="1179" fill="#141414" />
    <g filter="url(#rough)">
      <g clipPath="url(#land)">
        <g filter="url(#relief)">
          <rect width="2005" height="1179" fill="#3a3a3a" />
          <g transform={IMG}>
            {GLOW.map(([x, y, rx, ry, c, o, a], i) => (
              <ellipse key={i} cx={x} cy={y} rx={rx} ry={ry} fill={c} opacity={o} transform={a ? `rotate(${a} ${x} ${y})` : undefined} />
            ))}
          </g>
        </g>
        <g transform={IMG} fill="none" strokeLinejoin="round">
          <path d={VALLEYS} stroke="#262626" strokeWidth="9" opacity=".65" filter="url(#soft2)" />
          <path d={RIVERS} stroke="#161616" strokeWidth="7" />
          <path d="M495 255L560 262 545 330 535 480 505 490 470 450 500 370z" fill="#2a2a2a" opacity=".7" />
          <path d="M470 1110H502L508 1160 520 1175 518 1210 500 1225 480 1200 467 1160zM425 940L440 935 450 955 435 965z" fill="#161616" />
          <path d="M880 1320L917 1325 915 1400 875 1440zM805 465L850 470 848 520 835 560 822 545 815 490z" fill="#1c1c1c" />
          <path d="M655 465L675 478 690 480 700 475 722 482 720 545 690 555 672 548 655 570 640 600 645 565 655 540 672 525 680 505z" fill="#606060" />
          <path d="M640 735L665 742 672 718 690 735 715 738 728 708 738 720 738 770 715 782 700 785 688 810 672 840 665 838 672 800 682 778 660 765z" fill="#808080" />
          <path d="M745 725L770 735 800 770 840 800 835 812 790 785 755 750zM722 890L745 920 815 930 815 945 750 940z" fill="#424242" />
          <path d="M1128 850L1145 880 1165 940 1160 975 1125 970 1115 930z" fill="#525252" filter="url(#soft4)" />
          <path d="M235 490L260 480 270 520 245 560zM240 580L255 600 245 610z" fill="#505050" />
          <path d="M588 493L592 500 586 538 578 534 582 505z" fill="#000" />
          <path d="M588 1250L620 1285 655 1330 680 1395" stroke="#d0d0d0" strokeWidth="9" opacity=".65" filter="url(#soft4)" />
          <path d="M700 1390L750 1412 772 1455" stroke="#eee" strokeWidth="14" opacity=".75" filter="url(#soft4)" />
          <path d="M540 715L552 740 556 800 543 830 540 870 534 810 536 770zM596 815L612 820 626 870 622 900 605 880 594 860z" fill="#fff" filter="url(#soft2)" />
        </g>
      </g>
    </g>
    <g fill="#e8598c" stroke="#5a3040" strokeWidth="1">
      <circle cx="1056" cy="336" r="11" />
      <circle cx="853.500" cy="543" r="11.500" />
    </g>
  </MapSvg>
);

/* ---------- status bar ---------- */

const StatusBar = styled.div`
  height: 65px;
  flex: none;
  display: flex;
  align-items: center;
`;
const Gap = styled.div`
  flex: none;
  width: ${(p) => p.$w}px;
`;
const Field = styled.div`
  flex: none;
  width: ${(p) => p.$w}px;
  height: ${(p) => p.$h}px;
  display: flex;
  align-items: center;
  padding-left: ${(p) => p.$pad}px;
  background: #fff;
  border: 1px solid #adadad;
  border-radius: 2px;
`;
const Stepper = styled.div`
  margin-left: auto;
  align-self: stretch;
  width: 42px;
  display: flex;
  flex-direction: column;
  align-items: center;
  justify-content: center;
  gap: 14px;
  border-left: 1px solid #c4c4c4;
  background: linear-gradient(#fafafa, #eee);
`;
const Drop = styled.div`
  margin-left: auto;
  width: 60px;
  height: 42px;
  display: flex;
  align-items: center;
  justify-content: center;
  background: #f4f4f4;
`;

const Steps = () => (
  <Stepper>
    <Tri $dir="up" />
    <Tri />
  </Stepper>
);
const S = ({ w, children }) => <Label $size={32} w={w}>{children}</Label>;

/* ---------- page ---------- */

export default function App() {
  return (
    <Window>
      <Global />
      <Progress>
        <ProgressPart $w={144} $c="#0078d7" />
        <ProgressPart $w={580} $c="#e5e5e5" />
      </Progress>
      <TitleBar>
        <Icon n="logo" size={44} />
        <Label w={414} $color="#999">*Hands-on_Ex06b — QGIS</Label>
        <WindowButtons>
          <Icon n="min" size={20} />
          <Icon n="restore" size={20} />
          <Icon n="close" size={20} />
        </WindowButtons>
      </TitleBar>
      <MenuBar>
        {MENUS.map(([a, u, b, w]) => (
          <Label key={a + u + b} w={w} $color="#999">{a}<u>{u}</u>{b}</Label>
        ))}
      </MenuBar>
      <ToolStrip items={BAR1} h={79} line={1} />
      <ToolStrip items={BAR2} h={79} line={2} />
      <Body>
        <LeftDock>
          <DockTitle $left={0} $right={22}>
            <Label w={128}>Browser</Label>
            <Buttons />
          </DockTitle>
          <MiniBar $h={58} $left={12} $gap={13}>
            {["pageadd", "refresh", "funnel", "collapse", "info"].map((n) => <Icon key={n} n={n} size={30} />)}
          </MiniBar>
          <Panel $w={861} $h={785}>
            <Rows $top={1}>
              {BROWSER.map(([e, n, t, w, ind = 0]) => (
                <Row key={t + ind}>
                  <Cell $w={36 + ind}>{e && <Tri $dir={e === "r" ? "right" : "down"} />}</Cell>
                  <Cell $w={60}><Icon n={n} size={46} /></Cell>
                  <Label w={w}>{t}</Label>
                </Row>
              ))}
            </Rows>
            <ScrollCol>
              <ScrollPart $h={42}><Tri $dir="up" /></ScrollPart>
              <ScrollPart $h={191} $groove />
              <ScrollPart $h={477} />
              <ScrollPart $h={32} $groove />
              <ScrollPart $h={41} $last><Tri /></ScrollPart>
            </ScrollCol>
          </Panel>
          <Splitter><SplitDots /></Splitter>
          <DockTitle $left={0} $right={22}>
            <Label w={98}>Layers</Label>
            <Buttons />
          </DockTitle>
          <MiniBar $h={57} $left={13} $gap={13}>
            {["brush", "addgroup", "eyedrop", "funneldrop", "epsilon"].map((n) => <Icon key={n} n={n} size={30} />)}
            <Tri />
            {["expand", "collapse", "pagedel"].map((n) => <Icon key={n} n={n} size={30} />)}
          </MiniBar>
          <Panel $w={861} $h={678}>
            <Rows>
              {LAYERS.map((l) => (
                <Row key={l.t} $on={!!l.sel}>
                  <Cell $w={54}>{l.exp && <Tri $dir={l.exp} />}</Cell>
                  <Gap $w={6} />
                  <CheckBox>{l.on && <Icon n="check" size={36} />}</CheckBox>
                  <Cell $w={l.r ? 60 : 57}>{l.r ? <Icon n="raster" size={40} h={39} /> : l.sym}</Cell>
                  <Label w={l.w} $bold $italic={!!l.off} $underline={!!l.u} $color={l.off ? "#808080" : "#000"}>{l.t}</Label>
                  {l.chip && <Chip><Icon n="mem" size={30} /></Chip>}
                </Row>
              ))}
            </Rows>
          </Panel>
          <Marker viewBox="0 1278 870 110">
            <path
              d="M2 1286Q100 1284 275 1285C310 1286 335 1290 362 1290L436 1289Q455 1289 465 1291L505 1298Q540 1303 574 1304L654 1306 700 1311 769 1313Q795 1314 804 1312 820 1308 834 1292H855V1352Q850 1362 838 1367 832 1372 824 1372H775L677 1371 631 1366 551 1364 494 1358 436 1349H344L230 1345H29L22 1347H2z"
              fill="#ffee00"
            />
          </Marker>
        </LeftDock>
        <Canvas><Map /></Canvas>
        <RightDock>
          <DockTitle $left={4} $right={3}>
            <Label w={305}>Processing Toolbox</Label>
            <Buttons />
          </DockTitle>
          <MiniBar $h={58} $left={16} $gap={12}>
            {["gears", "pydrop", "clock", "doc"].map((n) => <Icon key={n} n={n} size={31} />)}
            <MiniGroup>
              <Divider $h={30} />
              <Icon n="note" size={31} />
              <Divider $h={30} />
              <Icon n="wrench" size={32} />
            </MiniGroup>
          </MiniBar>
          <SearchBox $left={20}>
            <Icon n="search" size={37} />
            <Label w={122} $italic $size={33} $color="#808080">Search...</Label>
          </SearchBox>
          <Panel $w={833} $h={1535} $leftLine>
            <Rows>
              {TOOLS.map(([n, t, w], i) => (
                <Row key={t}>
                  <Cell $w={59}><Tri $dir={i === 26 ? "down" : "right"} /></Cell>
                  <Cell $w={58}><Icon n={n} size={n === "logo" ? 41 : 44} /></Cell>
                  <Label w={w}>{t}</Label>
                </Row>
              ))}
              <Row $h={48}>
                <Gap $w={83} />
                <Cell $w={41} $align="flex-start"><Tri $dir="right" /></Cell>
                <Label w={125}>Analysis</Label>
              </Row>
              <Row $h={48}>
                <Gap $w={78} />
                <Cell $w={46} $align="flex-start"><Tri $dir="down" /></Cell>
                <Label w={281}>Create viewpoints</Label>
              </Row>
              <Row $on>
                <Gap $w={177} />
                <Cell $w={60}><Icon n="gear" size={44} /></Cell>
                <Label w={281}>Create viewpoints</Label>
              </Row>
            </Rows>
          </Panel>
        </RightDock>
      </Body>
      <StatusBar>
        <SearchBox $w={585} $left={20}>
          <Icon n="search" size={36} />
          <Label w={327} $size={32} $color="#808080">Type to locate (Ctrl+K)</Label>
        </SearchBox>
        <Gap $w={1402} />
        <S w={154}>Coordinate</S>
        <Gap $w={3} />
        <Field $w={195} $h={54} $pad={15}><S w={164}>27018,3124</S></Field>
        <Gap $w={7} />
        <Icon n="mouse" size={42} />
        <Gap $w={15} />
        <S w={76}>Scale</S>
        <Gap $w={2} />
        <Field $w={203} $h={46} $pad={4}><S w={131}>1:274297</S><Drop><Tri /></Drop></Field>
        <Gap $w={17} />
        <Icon n="lock" size={38} h={45} />
        <Gap $w={11} />
        <S w={131}>Magnifier</S>
        <Gap $w={3} />
        <Field $w={184} $h={58} $pad={4}><S w={83}>100%</S><Steps /></Field>
        <Gap $w={10} />
        <S w={119}>Rotation</S>
        <Gap $w={9} />
        <Field $w={153} $h={58} $pad={4}><S w={72}>0.0 º</S><Steps /></Field>
        <Gap $w={5} />
        <CheckBox $w={42}><Icon n="check" size={36} /></CheckBox>
        <Gap $w={17} />
        <S w={102}>Render</S>
        <Gap $w={15} />
        <Icon n="crs" size={28} />
        <Gap $w={2} />
        <S w={154}>EPSG:3414</S>
        <Gap $w={65} />
        <Icon n="bubble" size={31} />
      </StatusBar>
    </Window>
  );
}
